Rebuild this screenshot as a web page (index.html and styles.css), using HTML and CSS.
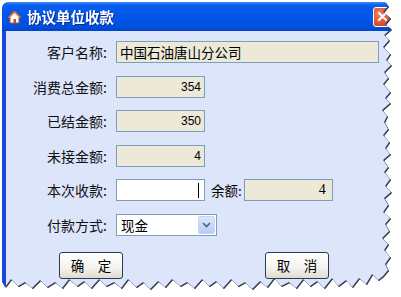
FILE: index.html
```html
<!DOCTYPE html>
<html>
<head>
	<meta charset="UTF-8">
	<title>协议单位收款</title>
	<link rel="stylesheet" href="styles.css">
</head>
<body>

	<div class="shot">
		<div class="window">

			<div class="titlebar">
				<svg class="title-icon" width="15" height="14" viewBox="0 0 15 14">
					<path d="M7.5 1 L1 7.5 L3 7.5 L3 13 L12 13 L12 7.5 L14 7.5 Z" fill="#fff" stroke="#c8541c" stroke-width="1"/>
					<path d="M7.5 1 L1 7.5 L3 7.5 L7.5 3 L12 7.5 L14 7.5 Z" fill="#e8702a"/>
					<rect x="6.5" y="9" width="2.5" height="4" fill="#c8541c"/>
				</svg>
				<span class="title-text">协议单位收款</span>
				<span class="close-btn">
					<svg width="11" height="11" viewBox="0 0 11 11">
						<path d="M2 2 L9 9 M9 2 L2 9" stroke="#fff" stroke-width="2" stroke-linecap="square"/>
					</svg>
				</span>
			</div>

			<div class="content">
				<div class="form">
					<span class="label">客户名称:</span>
					<div class="field wide">中国石油唐山分公司</div>

					<span class="label">消费总金额:</span>
					<div class="field num">354</div>

					<span class="label">已结金额:</span>
					<div class="field num">350</div>

					<span class="label">未接金额:</span>
					<div class="field num">4</div>

					<span class="label">本次收款:</span>
					<div class="pay-row">
						<div class="field edit"><span class="caret"></span></div>
						<span class="label-inline">余额:</span>
						<div class="field balance">4</div>
					</div>

					<span class="label">付款方式:</span>
					<div class="select">
						<span class="select-text">现金</span>
						<span class="select-arrow">
							<svg width="9" height="6" viewBox="0 0 9 6">
								<path d="M1 1 L4.5 4.5 L8 1" fill="none" stroke="#4d6185" stroke-width="1.6"/>
							</svg>
						</span>
					</div>
				</div>

				<div class="buttons">
					<span class="btn">确　定</span>
					<span class="btn">取　消</span>
				</div>
			</div>

		</div>
	</div>

</body>
</html>
```

FILE: styles.css
```css
html, body {
	margin: 0;
	padding: 0;
	background: #fff;
}

body {
	width: 401px;
	height: 297px;
	overflow: hidden;
	font-family: "Noto Sans CJK SC", "Liberation Sans", sans-serif;
	font-size: 13px;
	color: #000;
}

.shot {
	padding: 2px 0 0 2px;
	filter: drop-shadow(1px 1px 0.6px rgba(0, 0, 0, .75));
}

.window {
	width: 391px;
	height: 290px;
	background: #1848dc;
	display: flex;
	flex-direction: column;
	clip-path: polygon(
		0 6px, 1px 3px, 3px 1px, 6px 0, 383px 0,
		386px 4px, 381px 10px, 388px 16px, 383px 22px, 389px 27px, 382px 33px, 387px 38px,
		381px 45px, 388px 52px, 384px 58px, 389px 63px, 382px 70px, 386px 76px, 381px 82px,
		388px 90px, 383px 96px, 388px 101px, 380px 108px, 385px 114px, 382px 120px, 386px 127px,
		381px 133px, 387px 140px, 383px 146px, 388px 152px, 381px 158px, 386px 165px, 382px 170px,
		388px 177px, 383px 184px, 389px 190px, 382px 196px, 386px 203px, 381px 210px, 388px 216px,
		383px 222px, 387px 229px, 380px 236px, 386px 242px, 382px 248px, 388px 255px, 383px 262px,
		386px 268px, 381px 274px,
		376px 278px, 370px 272px, 364px 282px, 357px 276px, 350px 285px, 344px 278px, 336px 284px,
		330px 276px, 322px 286px, 315px 279px, 308px 284px, 301px 277px, 294px 286px, 287px 280px,
		279px 284px, 272px 276px, 265px 285px, 258px 279px, 250px 287px, 243px 280px, 236px 284px,
		229px 277px, 221px 286px, 214px 279px, 207px 284px, 200px 277px, 192px 286px, 185px 280px,
		178px 284px, 170px 277px, 163px 285px, 156px 279px, 148px 287px, 141px 280px, 134px 285px,
		126px 277px, 119px 286px, 112px 280px, 104px 284px, 97px 277px, 89px 286px, 82px 279px,
		75px 284px, 67px 277px, 60px 286px, 53px 280px, 45px 285px, 38px 278px, 30px 286px,
		23px 280px, 16px 284px, 9px 277px, 3px 285px, 0 280px
	);
}

/* title bar */

.titlebar {
	height: 29px;
	flex: none;
	display: flex;
	align-items: center;
	padding-left: 5px;
	background: linear-gradient(#3d8cf7 0, #0a5fef 3px, #0055e8 50%, #0050e0 85%, #0244c8 100%);
	border-radius: 6px 6px 0 0;
}

.title-icon {
	flex: none;
	margin-right: 5px;
}

.title-text {
	color: #fff;
	font-weight: bold;
	font-size: 14.5px;
	text-shadow: 1px 1px 0 #0a2a90;
}

.close-btn {
	margin-left: auto;
	margin-right: 1px;
	width: 17px;
	height: 18px;
	display: flex;
	align-items: center;
	justify-content: center;
	border: 1px solid #fff;
	border-radius: 3px;
	background: radial-gradient(circle at 35% 35%, #f08060, #d94a22 70%, #b8381a);
}

/* client area */

.content {
	flex: 1;
	margin-left: 4px;
	background: #dde5fb;
	padding-top: 10px;
}

.form {
	display: grid;
	grid-template-columns: 104px auto;
	grid-auto-rows: 22px;
	column-gap: 6px;
	row-gap: 12.5px;
	justify-items: start;
	align-items: center;
}

.label {
	justify-self: end;
	padding-right: 3px;
	font-size: 14px;
	color: #111;
}

.field {
	box-sizing: border-box;
	height: 22px;
	border: 1px solid #7f9db9;
	background: #ece9d8;
	display: flex;
	align-items: center;
	padding: 0 3px;
	font-size: 13.5px;
}

.wide {
	width: 263px;
}

.num {
	width: 89px;
	justify-content: flex-end;
	font-family: "Liberation Sans", sans-serif;
	font-size: 12px;
}

.pay-row {
	display: flex;
	align-items: center;
}

.edit {
	width: 89px;
	background: #fff;
	justify-content: flex-end;
	padding-right: 5px;
}

.caret {
	width: 1px;
	height: 15px;
	background: #000;
}

.label-inline {
	margin-left: 6px;
	margin-right: 2px;
	font-size: 13.5px;
}

.balance {
	width: 89px;
	justify-content: flex-end;
	font-family: "Liberation Serif", serif;
	font-size: 14px;
	padding-right: 6px;
}

.select {
	box-sizing: border-box;
	width: 101px;
	height: 22px;
	border: 1px solid #7f9db9;
	background: #fff;
	display: flex;
	align-items: center;
	padding: 1px;
}

.select-text {
	flex: 1;
	padding-left: 3px;
	font-size: 13.5px;
}

.select-arrow {
	width: 17px;
	height: 18px;
	display: flex;
	align-items: center;
	justify-content: center;
	background: linear-gradient(#dbe6fd, #b7cbf6);
	border-radius: 2px;
	border: 1px solid #c4d3f5;
	box-sizing: border-box;
}

/* buttons */

.buttons {
	display: flex;
	gap: 142px;
	padding: 16px 0 0 53px;
}

.btn {
	box-sizing: border-box;
	width: 64px;
	height: 27px;
	display: flex;
	align-items: center;
	justify-content: center;
	border: 1px solid #2c3a52;
	border-radius: 3px;
	background: linear-gradient(#ffffff, #f4f3ee 60%, #dedbd0);
	font-size: 13.5px;
}
```
